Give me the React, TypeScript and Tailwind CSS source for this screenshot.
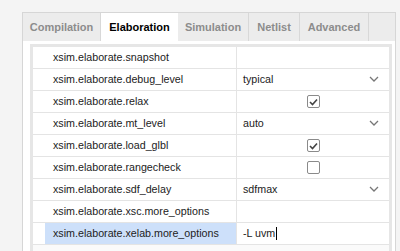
import React from 'react'

type Row = { name: string; kind: 'text' | 'select' | 'check'; value?: string; checked?: boolean; selected?: boolean; editing?: boolean }

const rows: Row[] = [
  { name: 'xsim.elaborate.snapshot', kind: 'text', value: '' },
  { name: 'xsim.elaborate.debug_level', kind: 'select', value: 'typical' },
  { name: 'xsim.elaborate.relax', kind: 'check', checked: true },
  { name: 'xsim.elaborate.mt_level', kind: 'select', value: 'auto' },
  { name: 'xsim.elaborate.load_glbl', kind: 'check', checked: true },
  { name: 'xsim.elaborate.rangecheck', kind: 'check', checked: false },
  { name: 'xsim.elaborate.sdf_delay', kind: 'select', value: 'sdfmax' },
  { name: 'xsim.elaborate.xsc.more_options', kind: 'text', value: '' },
  { name: 'xsim.elaborate.xelab.more_options', kind: 'text', value: '-L uvm', selected: true, editing: true },
]

const tabs = [
  { label: 'Compilation', w: 'w-[78px]' },
  { label: 'Elaboration', w: 'w-[77px]', active: true },
  { label: 'Simulation', w: 'w-[71px]' },
  { label: 'Netlist', w: 'w-[51px]' },
  { label: 'Advanced', w: 'w-[69px]' },
]

function Chevron() {
  return (
    <svg width="10" height="6" viewBox="0 0 10 6" className="text-[#777]">
      <path d="M1 1l4 4 4-4" fill="none" stroke="currentColor" strokeWidth="1.3" />
    </svg>
  )
}

function Check({ on }: { on?: boolean }) {
  return (
    <div className="flex h-[13px] w-[13px] items-center justify-center rounded-[2px] border border-[#8a8a8a] bg-white">
      {on && (
        <svg width="9" height="8" viewBox="0 0 9 8">
          <path d="M1 4l2.5 2.5L8 1.5" fill="none" stroke="#444" strokeWidth="1.6" />
        </svg>
      )}
    </div>
  )
}

export default function App() {
  return (
    <div className="flex h-[251px] w-[400px] overflow-hidden bg-[#f4f4f4] pt-[12px] pl-[22px] font-['Liberation_Sans',Arial,sans-serif]">
      <div className="flex w-[374px] flex-col border-x border-t border-[#d6d6d6] bg-[#f0f0f0]">
        {/* Tabs */}
        <div className="flex h-[28px] bg-[#ececec] text-[11px]">
          {tabs.map((t) => (
            <div
              key={t.label}
              className={`flex items-center justify-center ${t.w} ${
                t.active ? 'bg-white font-bold text-black' : 'border-r border-[#d8d8d8] text-[#8c8c8c] font-semibold'
              }`}
            >
              {t.label}
            </div>
          ))}
        </div>
        {/* Content */}
        <div className="flex-1 bg-white pl-[7px] pr-[3px] pt-[3px]">
          <div className="h-full border-[3px] border-b-0 border-[#e6e6e6] bg-[#fafafa]">
            <div className="bg-white">
              {rows.map((r) => (
                <div key={r.name} className="flex h-[22px] border-b border-[#e4e4e4] text-[10.7px] text-[#222]">
                  <div className="flex w-[204px] border-r border-[#e4e4e4] pl-[12px]">
                    <div className={`flex flex-1 items-center pl-[8px] ${r.selected ? 'bg-[#cde0fa]' : ''}`}>{r.name}</div>
                  </div>
                  <div className="flex flex-1 items-center pl-[6px] pr-[10px]">
                    {r.kind === 'select' && (
                      <div className="flex flex-1 items-center justify-between">
                        <span>{r.value}</span>
                        <Chevron />
                      </div>
                    )}
                    {r.kind === 'check' && (
                      <div className="flex flex-1 justify-center pl-[4px]">
                        <Check on={r.checked} />
                      </div>
                    )}
                    {r.kind === 'text' && (
                      <div className="flex items-center">
                        <span>{r.value}</span>
                        {r.editing && <span className="ml-[1px] h-[13px] w-[1px] bg-black" />}
                      </div>
                    )}
                  </div>
                </div>
              ))}
            </div>
          </div>
        </div>
      </div>
    </div>
  )
}
